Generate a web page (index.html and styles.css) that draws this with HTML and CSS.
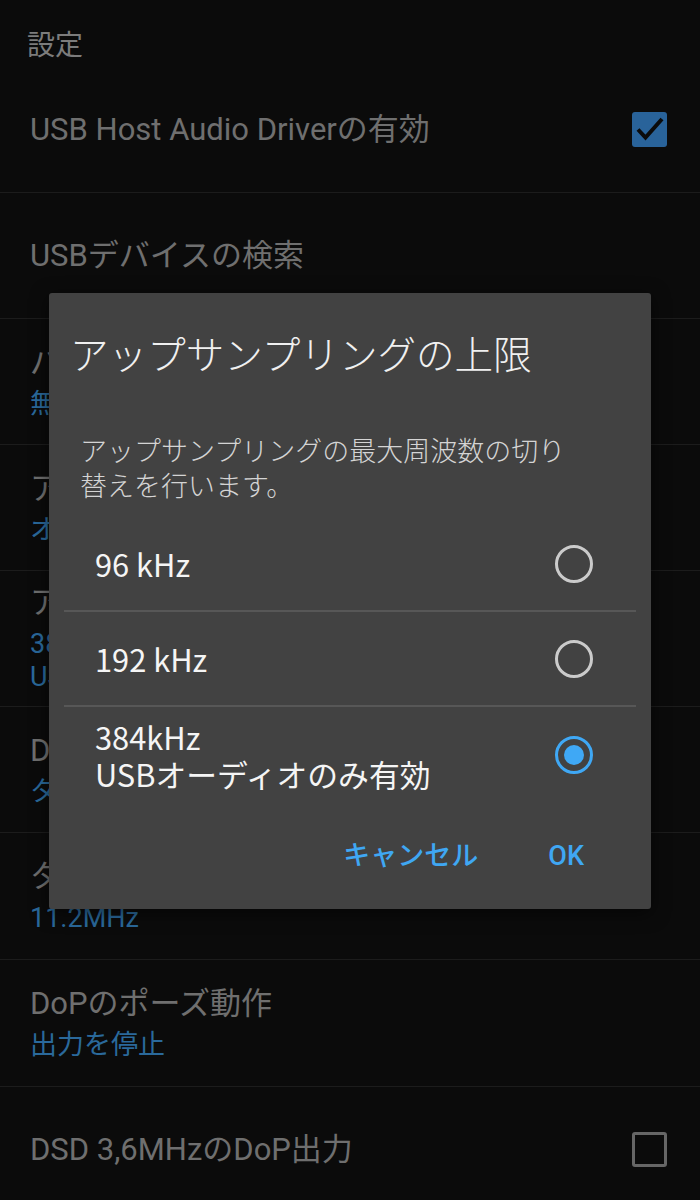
FILE: index.html
```html
<!DOCTYPE html>
<html lang="ja">
<head>
<meta charset="utf-8">
<title>設定</title>
<link rel="stylesheet" href="styles.css">
</head>
<body>
<div class="screen">
  <div class="appbar">設定</div>
  <ul class="prefs">
    <li class="pref">
      <div class="pref-text"><div class="pref-title">USB Host Audio Driverの有効</div></div>
      <span class="checkbox checked"><svg viewBox="0 0 35 35" width="35" height="35"><rect width="35" height="35" rx="3" fill="#29639a"/><path d="M6 17.5 L13.5 25.5 L30 7" stroke="#0b0b0b" stroke-width="4" fill="none"/></svg></span>
    </li>
    <li class="pref">
      <div class="pref-text"><div class="pref-title">USBデバイスの検索</div></div>
    </li>
    <li class="pref">
      <div class="pref-text"><div class="pref-title">パススルー出力</div><div class="pref-summary">無効</div></div>
    </li>
    <li class="pref">
      <div class="pref-text"><div class="pref-title">アップサンプリング</div><div class="pref-summary">オフ</div></div>
    </li>
    <li class="pref">
      <div class="pref-text"><div class="pref-title">アップサンプリングの上限</div><div class="pref-summary">384kHz<br>USBオーディオのみ有効</div></div>
    </li>
    <li class="pref">
      <div class="pref-text"><div class="pref-title">DSDの出力方式</div><div class="pref-summary">タイプ2</div></div>
    </li>
    <li class="pref pref-tall">
      <div class="pref-text"><div class="pref-title">ターゲット周波数</div><div class="pref-summary">11.2MHz</div></div>
    </li>
    <li class="pref pref-tall">
      <div class="pref-text"><div class="pref-title">DoPのポーズ動作</div><div class="pref-summary">出力を停止</div></div>
    </li>
    <li class="pref">
      <div class="pref-text"><div class="pref-title">DSD 3,6MHzのDoP出力</div></div>
      <span class="checkbox"></span>
    </li>
  </ul>

  <div class="dialog">
    <h2 class="dialog-title">アップサンプリングの上限</h2>
    <p class="dialog-message">アップサンプリングの最大周波数の切り<br>替えを行います。</p>
    <ul class="choices">
      <li class="choice"><span class="choice-label">96 kHz</span><span class="radio"></span></li>
      <li class="choice"><span class="choice-label">192 kHz</span><span class="radio"></span></li>
      <li class="choice"><span class="choice-label">384kHz<br>USBオーディオのみ有効</span><span class="radio selected"></span></li>
    </ul>
    <div class="dialog-buttons">
      <button class="dialog-button">キャンセル</button>
      <button class="dialog-button">OK</button>
    </div>
  </div>
</div>
</body>
</html>
```

FILE: styles.css
```css
html, body {
  margin: 0;
  padding: 0;
  background: #0b0b0b;
}

.screen {
  position: relative;
  width: 700px;
  height: 1200px;
  overflow: hidden;
  background: #0b0b0b;
  font-family: "Roboto", "Noto Sans CJK JP", sans-serif;
}

.appbar {
  height: 67px;
  box-sizing: border-box;
  padding: 26px 0 0 27px;
  font-family: "Noto Sans CJK JP", sans-serif;
  font-size: 28px;
  line-height: 34px;
  color: #7c7c7c;
}

.prefs {
  list-style: none;
  margin: 0;
  padding: 0;
}

.pref {
  display: flex;
  align-items: center;
  justify-content: space-between;
  box-sizing: border-box;
  min-height: 126px;
  padding: 12px 33px 12px 30px;
  border-bottom: 1px solid #1c1c1c;
}

.pref-tall {
  min-height: 127px;
}

.pref-title {
  font-size: 31px;
  line-height: 40px;
  color: #6f6f6f;
  white-space: nowrap;
}

.pref-summary {
  margin-top: 5px;
  font-size: 27px;
  line-height: 33px;
  color: #2a699b;
}

.checkbox {
  display: block;
  width: 35px;
  height: 35px;
  box-sizing: border-box;
  border: 3px solid #666666;
  border-radius: 3px;
}

.checkbox.checked {
  border: 0;
}

.checkbox svg {
  display: block;
}

.dialog {
  position: absolute;
  left: 49px;
  top: 293px;
  width: 602px;
  height: 616px;
  background: #424242;
  border-radius: 3px;
  box-shadow: 0 4px 18px rgba(0, 0, 0, 0.55);
  font-family: "Noto Sans CJK JP", sans-serif;
}

.dialog-title {
  margin: 0;
  padding: 35px 20px 0 21px;
  font-size: 38.6px;
  line-height: 48px;
  font-weight: 300;
  color: #f0f0f0;
}

.dialog-message {
  margin: 56px 0 0;
  padding: 0 31px;
  font-size: 27px;
  line-height: 35px;
  font-weight: 300;
  color: #d4d4d4;
}

.choices {
  list-style: none;
  margin: 15px 15px 0;
  padding: 0;
}

.choice {
  display: flex;
  align-items: center;
  justify-content: space-between;
  box-sizing: border-box;
  height: 95px;
  padding: 0 43px 0 31px;
  border-bottom: 2px solid #575757;
  font-size: 30.8px;
  line-height: 37px;
  color: #f5f5f5;
}

.choice:last-child {
  border-bottom: 0;
}

.radio {
  display: grid;
  place-items: center;
  width: 38px;
  height: 38px;
  box-sizing: border-box;
  border: 3.5px solid #cbcbcb;
  border-radius: 50%;
}

.radio.selected {
  border-color: #3fa8f5;
}

.radio.selected::after {
  content: "";
  width: 20px;
  height: 20px;
  border-radius: 50%;
  background: #3fa8f5;
}

.dialog-buttons {
  display: flex;
  justify-content: flex-end;
  align-items: center;
  gap: 40px;
  height: 107px;
  padding-right: 52px;
}

.dialog-button {
  background: none;
  border: 0;
  padding: 0 15px;
  font-family: "Roboto", "Noto Sans CJK JP", sans-serif;
  font-size: 27px;
  font-weight: 500;
  line-height: 36px;
  color: #3fa7f3;
}
```
